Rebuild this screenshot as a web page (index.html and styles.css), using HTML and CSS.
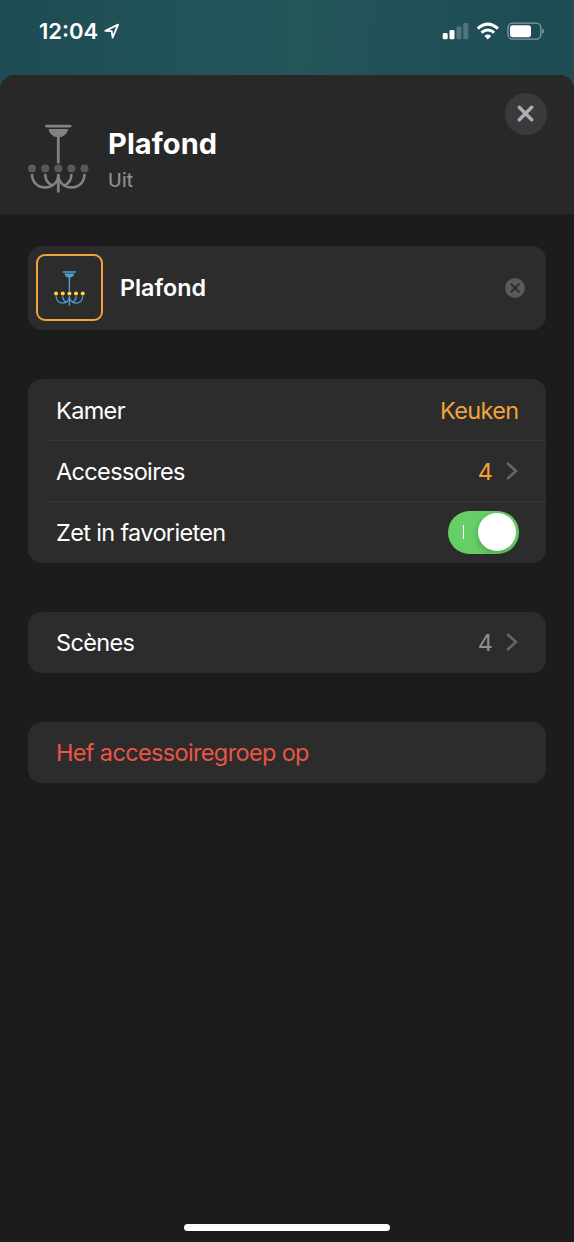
FILE: index.html
```
<!DOCTYPE html>
<html lang="nl">
<head>
<meta charset="utf-8">
<title>Plafond</title>
<link rel="stylesheet" href="styles.css">
</head>
<body>
<svg class="symbols" aria-hidden="true">
  <symbol id="chandelier" viewBox="0 0 61 69">
    <g fill="none" stroke="currentColor" stroke-width="2.8">
      <path d="M18.4 2.1H42.2" stroke-linecap="round"/>
      <path d="M30.3 10V39.5M30.3 50V68.5"/>
      <path d="M4 50C4 58.5 10 63.4 17.2 63.4C24.4 63.4 30.3 58 30.3 51C30.3 58 36.2 63.4 43.4 63.4C50.6 63.4 56.5 58.5 56.5 50" stroke-width="2.6"/>
      <path d="M17.2 50C17.2 55.5 20 59.8 24.6 61.4M43.4 50C43.4 55.5 40.6 59.8 36 61.4" stroke-width="2.6"/>
    </g>
    <path d="M20.6 5H40C39.5 9.5 35.8 13.3 30.3 13.3S21.1 9.5 20.6 5Z" fill="currentColor"/>
    <g class="bulbs">
      <circle cx="4" cy="44.5" r="4"/><circle cx="17.2" cy="44.5" r="4"/><circle cx="30.3" cy="44.5" r="4"/><circle cx="43.4" cy="44.5" r="4"/><circle cx="56.5" cy="44.5" r="4"/>
    </g>
  </symbol>
</svg>
<div class="screen">
  <div class="status">
    <div class="status-left">
      <span class="clock">12:04</span>
      <svg class="location" width="16" height="16" viewBox="0 0 16 16"><path d="M1.3 7.9L14.1 1.6L8.6 14.6L7.7 8.2Z" fill="none" stroke="#fff" stroke-width="1.8" stroke-linejoin="round"/></svg>
    </div>
    <svg width="102" height="18" viewBox="0 0 102 18">
      <g fill="#fff">
        <rect x="0.7" y="11" width="5" height="6.3" rx="1.4"/><rect x="7.5" y="8" width="5" height="9.3" rx="1.4"/>
        <g opacity=".22"><rect x="14.4" y="4.6" width="5" height="12.7" rx="1.4"/><rect x="21.3" y="1" width="5" height="16.3" rx="1.4"/></g>
        <path d="M45.8 17.4L42.4 13.9Q45.8 11.2 49.2 13.9Z"/>
        <rect x="68" y="3.2" width="21" height="12" rx="2.6"/>
        <path d="M100.3 6.3Q102 7.2 102 9.2T100.3 12.1Z" opacity=".45"/>
      </g>
      <g fill="none" stroke="#fff">
        <path d="M35.7 6.6Q45.8-2.2 55.9 6.6" stroke-width="3.2"/>
        <path d="M39.4 10.7Q45.8 5.2 52.2 10.7" stroke-width="3"/>
        <rect x="66" y="1.2" width="32.8" height="16" rx="4.5" stroke-width="1.3" opacity=".45"/>
      </g>
    </svg>
  </div>
  <main class="sheet">
    <header class="header">
      <svg class="lamp lamp-off" width="61" height="69"><use href="#chandelier"/></svg>
      <div class="heading">
        <h1 class="title">Plafond</h1>
        <p class="state">Uit</p>
      </div>
      <button class="close" aria-label="Sluit"><svg width="17" height="17" viewBox="0 0 17 17"><path d="M2.3 2.3L14.7 14.7M14.7 2.3L2.3 14.7" stroke="#adadb2" stroke-width="3.5" stroke-linecap="round"/></svg></button>
    </header>
    <div class="content">
      <section class="card name-card">
        <div class="icon-frame"><svg class="lamp lamp-on" width="31" height="35"><use href="#chandelier"/></svg></div>
        <span class="name">Plafond</span>
        <svg width="20" height="20" viewBox="0 0 20 20"><circle cx="10" cy="10" r="9.9" fill="#5a5a5d"/><path d="M6.3 6.3L13.7 13.7M13.7 6.3L6.3 13.7" stroke="#2c2c2c" stroke-width="2" stroke-linecap="round"/></svg>
      </section>
      <section class="card">
        <div class="row"><span class="label">Kamer</span><span class="label accent">Keuken</span></div>
        <div class="row"><span class="label">Accessoires</span><span class="value accent">4<svg class="chevron" width="12" height="18" viewBox="0 0 12 18"><path d="M2 1.8L10 9L2 16.2"/></svg></span></div>
        <div class="row"><span class="label">Zet in favorieten</span><span class="switch"><span class="mark"></span><span class="knob"></span></span></div>
      </section>
      <section class="card">
        <div class="row"><span class="label">Scènes</span><span class="value muted">4<svg class="chevron" width="12" height="18" viewBox="0 0 12 18"><path d="M2 1.8L10 9L2 16.2"/></svg></span></div>
      </section>
      <section class="card">
        <div class="row danger"><span class="label">Hef accessoiregroep op</span></div>
      </section>
    </div>
    <div class="home-bar"></div>
  </main>
</div>
</body>
</html>
```
FILE: styles.css
```
* { box-sizing: border-box; }
body { margin: 0; font-family: Inter, "Liberation Sans", sans-serif; color: #fff; background: #1c1c1c; }
svg { display: block; flex: none; }
.symbols { width: 0; height: 0; position: absolute; }
.screen { width: 574px; height: 1242px; display: flex; flex-direction: column; overflow: hidden;
  background: linear-gradient(95deg, #1e4b54 0%, #225359 28%, #245559 45%, #1f4e56 72%, #214850 100%); }
.status { height: 75px; flex: none; padding: 22px 30px 0 39px; display: flex; justify-content: space-between; align-items: flex-start; }
.status-left { display: flex; gap: 6px; }
.clock { font-size: 22px; line-height: 19px; font-weight: 600; width: 59px; white-space: nowrap; }
.location { margin-top: 1px; }
.sheet { flex: 1; display: flex; flex-direction: column; background: #1c1c1c; border-radius: 15px 15px 0 0; overflow: hidden; }
.header { height: 140px; flex: none; display: flex; align-items: flex-start; background: #282828; border-bottom: 1px solid #202020; padding: 18px 27.5px 0 28px; }
.lamp-off { margin-top: 31px; color: #828286; fill: #59595b; }
.lamp-on { color: #4e9fd1; fill: #ffd43b; }
.heading { flex: 1; padding: 33px 0 0 19px; }
.title { margin: 0; font-size: 29px; line-height: 36px; font-weight: 700; letter-spacing: .1px; }
.state { margin: 5.5px 0 0; font-size: 18.5px; line-height: 24px; font-weight: 500; color: #8e8e93; letter-spacing: .2px; }
.close { width: 41.5px; height: 41.5px; border: 0; padding: 0; border-radius: 50%; background: #3a3a3c; display: grid; place-items: center; }
.close svg { margin-bottom: 1px; }
.content { flex: 1; padding: 30.5px 28px 0; display: flex; flex-direction: column; gap: 49px; }
.card { background: #2c2c2c; border-radius: 14px; overflow: hidden; flex: none; }
.name-card { height: 84.5px; display: flex; align-items: center; padding: 0 21px 0 8px; }
.icon-frame { width: 67px; height: 67px; border: 2px solid #f2a33a; border-radius: 9px; display: grid; place-items: center; padding-top: 1px; }
.name { flex: 1; padding-left: 17px; font-size: 23.3px; font-weight: 600; }
.row { height: 61px; margin-left: 20px; padding: 0 27.5px 0 8px; display: flex; align-items: center; justify-content: space-between; font-size: 23.5px; white-space: nowrap; }
.row + .row { border-top: 1px solid #3a3a3b; height: 61.3px; }
.label { letter-spacing: -.65px; padding-top: 1px; }
.accent { color: #f2a33a; }
.muted { color: #8e8e93; }
.danger { color: #eb5545; }
.value { display: flex; align-items: center; gap: 12.5px; }
.chevron { fill: none; stroke: #656568; stroke-width: 2.7; stroke-linecap: round; stroke-linejoin: round; margin-right: 1px; }
.switch { width: 71px; height: 43px; border-radius: 22px; background: #65cf66; display: flex; align-items: center; justify-content: space-between; padding: 0 3px 0 15px; }
.mark { width: 1.5px; height: 14px; background: #fff; }
.knob { width: 38px; height: 38px; border-radius: 50%; background: #fff; box-shadow: -1px 3px 6px rgba(0,0,0,.18); }
.home-bar { width: 206px; height: 7px; border-radius: 4px; background: #fff; margin: 0 auto 11px; }
```
